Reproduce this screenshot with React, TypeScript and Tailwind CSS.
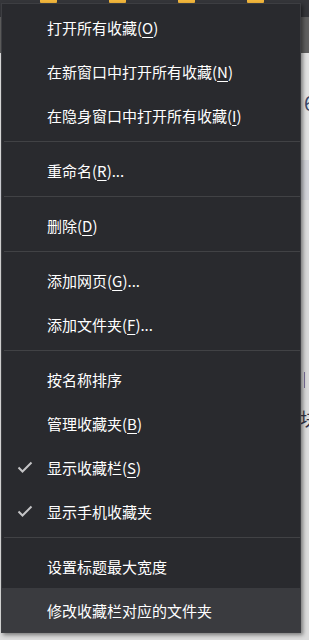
import { Fragment } from "react";

type Item = {
  label: string;
  key?: string;
  suffix?: string;
  checked?: boolean;
  active?: boolean;
};

// groups separated by a line
const groups: Item[][] = [
  [
    { label: "打开所有收藏", key: "O" },
    { label: "在新窗口中打开所有收藏", key: "N" },
    { label: "在隐身窗口中打开所有收藏", key: "I" },
  ],
  [{ label: "重命名", key: "R", suffix: "..." }],
  [{ label: "删除", key: "D" }],
  [
    { label: "添加网页", key: "G", suffix: "..." },
    { label: "添加文件夹", key: "F", suffix: "..." },
  ],
  [
    { label: "按名称排序" },
    { label: "管理收藏夹", key: "B" },
    { label: "显示收藏栏", key: "S", checked: true },
    { label: "显示手机收藏夹", checked: true },
  ],
  [
    { label: "设置标题最大宽度" },
    { label: "修改收藏栏对应的文件夹", active: true },
  ],
];

function Check() {
  return (
    <svg width="16" height="12" viewBox="0 0 16 12" fill="none">
      <path d="M1.5 6.5 L5.5 10.5 L14.5 1.5" stroke="#c4c4c6" strokeWidth="2" />
    </svg>
  );
}

function MenuItem({ item }: { item: Item }) {
  return (
    <div className={"h-11 flex items-center " + (item.active ? "bg-[#3a3b3f]" : "")}>
      <div className="w-[45px] flex justify-center pl-[1px]">
        {item.checked && <Check />}
      </div>
      <span className="text-[15px] text-white leading-none whitespace-nowrap">
        {item.label}
        {item.key && (
          <>
            (<span className="underline underline-offset-[3px] decoration-1">{item.key}</span>)
          </>
        )}
        {item.suffix}
      </span>
    </div>
  );
}

function Folder() {
  return <div className="w-[17px] h-[12px] -mt-[9px] bg-[#f2b63c] rounded-[1px]" />;
}

export default function App() {
  return (
    <div
      className="relative w-[309px] h-[640px] overflow-hidden bg-[#dcdcdc]"
      style={{ fontFamily: '"Noto Sans CJK SC", "Microsoft YaHei", sans-serif' }}
    >
      {/* page behind the menu */}
      <div className="h-[17px] bg-[#35363a] flex items-start gap-[52px] pl-[40px]">
        <Folder />
        <Folder />
        <Folder />
        <Folder />
      </div>
      <div className="h-[36px] bg-[#5f5f5f]" />
      <div className="h-[107px] bg-[#e2e2e2] flex items-start justify-end pt-[37px]">
        <span className="text-[20px] leading-[26px] text-[#3b4a6b] -mr-[6px]">6</span>
      </div>
      <div className="h-[40px] bg-[#d3d4da]" />
      <div className="h-[40px] bg-[#dedede]" />
      <div className="h-[120px] bg-[#d9d9d9]" />
      <div className="h-[40px] bg-[#d9d9d9] flex items-start justify-end pt-[12px]">
        <div className="w-px h-[16px] bg-[#7a6f9a] mr-[4px]" />
      </div>
      <div className="h-[60px] bg-[#dedede] flex items-start justify-end pt-[7px]">
        <span className="text-[18px] leading-[22px] text-[#334] -mr-[9px]">块</span>
      </div>

      {/* context menu */}
      <div className="absolute left-[1px] top-[3px] w-[300px] h-[630px] bg-[#292a2e] border border-[#3d3e42] pt-px shadow-[2px_2px_4px_rgba(0,0,0,0.45)]">
        {groups.map((g, gi) => (
          <Fragment key={gi}>
            {gi > 0 && <div className="mt-1 mb-[6px] ml-[2px] h-px bg-[#414245]" />}
            {g.map((it) => (
              <MenuItem key={it.label} item={it} />
            ))}
          </Fragment>
        ))}
      </div>
    </div>
  );
}
